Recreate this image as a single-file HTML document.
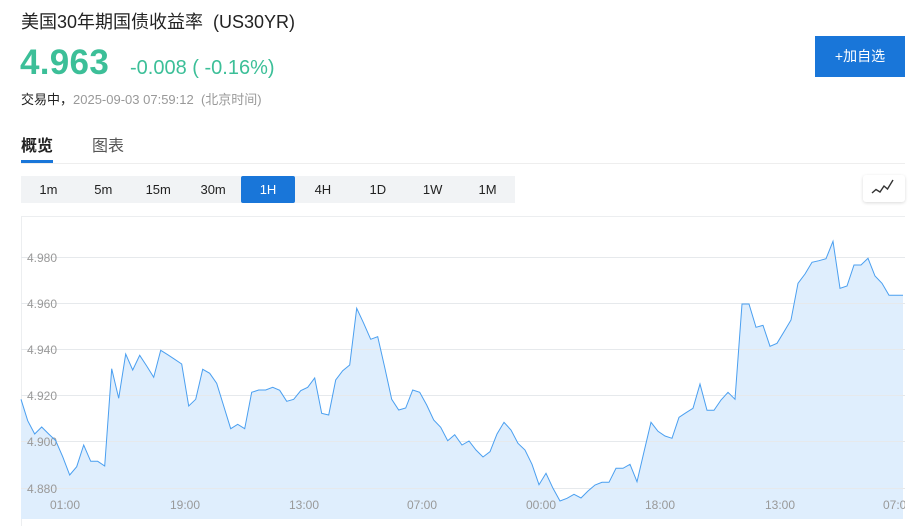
<!DOCTYPE html>
<html><head><meta charset="utf-8"><style>
*{margin:0;padding:0;box-sizing:border-box}
body{width:915px;height:526px;overflow:hidden;background:#fff;font-family:"Liberation Sans","Noto Sans CJK SC",sans-serif;position:relative;color:#222}
.a{position:absolute;white-space:nowrap}
</style></head><body>
<div class="a" style="left:21px;top:8px;font-size:18px;color:#222">美国30年期国债收益率 &nbsp;(US30YR)</div>
<div class="a" style="left:20px;top:43px;font-size:35px;font-weight:bold;color:#3cbf98;letter-spacing:0.3px">4.963</div>
<div class="a" style="left:130px;top:57px;font-size:20px;color:#3cbf98">-0.008 ( -0.16%)</div>
<div class="a" style="left:21px;top:89px;font-size:13px;color:#222">交易中，<span style="color:#999">2025-09-03 07:59:12 &nbsp;(北京时间)</span></div>
<div class="a" style="left:815px;top:36px;width:90px;height:41px;background:#1976d9;color:#fff;font-size:14px;line-height:41px;text-align:center">+加自选</div>
<div class="a" style="left:21px;top:132px;font-size:16px;font-weight:bold;color:#222">概览</div>
<div class="a" style="left:92px;top:132px;font-size:16px;color:#555">图表</div>
<div class="a" style="left:21px;top:160px;width:32px;height:3px;background:#1976d9"></div>
<div class="a" style="left:21px;top:163px;width:884px;height:1px;background:#eee"></div>
<div class="a" style="left:21px;top:176px;width:494px;height:27px;background:#f1f3f5;font-size:13px;display:flex">
<div style="width:54.9px;text-align:center;line-height:27px">1m</div>
<div style="width:54.9px;text-align:center;line-height:27px">5m</div>
<div style="width:54.9px;text-align:center;line-height:27px">15m</div>
<div style="width:54.9px;text-align:center;line-height:27px">30m</div>
<div style="width:54.9px;text-align:center;line-height:27px;background:#1976d9;color:#fff;border-radius:2px">1H</div>
<div style="width:54.9px;text-align:center;line-height:27px">4H</div>
<div style="width:54.9px;text-align:center;line-height:27px">1D</div>
<div style="width:54.9px;text-align:center;line-height:27px">1W</div>
<div style="width:54.9px;text-align:center;line-height:27px">1M</div>
</div>
<div class="a" style="left:863px;top:175px;width:42px;height:27px;background:#fff;border-radius:3px;box-shadow:0 1px 3px rgba(0,0,0,0.15)"></div>
<svg class="a" style="left:0;top:0" width="915" height="526">
<polyline points="872,193 876,189.5 880,192 884,186 887.5,189 893,180" fill="none" stroke="#333" stroke-width="1.4"/>
<rect x="21.5" y="216.5" width="884" height="310" fill="none" stroke="#eceef0"/>
<polygon fill="#dfeefd" points="21,519 21,399.3 27.7,420.7 34.7,434 41.7,427 48.7,434 55.7,440.7 62.7,456.7 69.7,475 76.7,466.7 83.7,445 90.7,461.3 97.7,461.3 104.7,466 111.7,368.7 118.7,398.3 125.7,354 132.7,370 139.7,355.3 146.7,366 153.7,377.3 160.7,350.3 167.7,354.7 174.7,359.3 181.7,364 188.7,406 195.7,399.3 202.7,369.3 209.7,373.3 216.7,383.3 223.7,406 230.7,428.7 237.7,424.3 244.7,428.7 251.7,392.3 258.7,390 265.7,390 272.7,387.3 279.7,390.3 286.7,401.3 293.7,399.3 300.7,390.7 307.7,387.3 314.7,378 321.7,413.3 328.7,415 335.7,380 342.7,370.7 349.7,365 356.7,308.3 363.7,323.3 370.7,339.3 377.7,336.7 384.7,367.3 391.7,399.3 398.7,410 405.7,408 412.7,390 419.7,392.3 426.7,405 433.7,420 440.7,427.3 447.7,440.7 454.7,434.7 462,445 469,441 476,450 483,457 490,451.7 497,434 504,422.3 511,430 518,443.3 525,450 532,464.3 539,484.7 546,473.3 553,488.3 560,501 567,498.3 574,494.3 581,498 588,491 595,485 602,482.3 609,482.3 616,468.3 623,468.3 630,464.3 637,481.7 644,451.7 651,422.3 658,431.3 665,436 672,438.3 679,417.3 686,412.7 693,408.3 700,384 707,410.3 714,410.3 721,400 728,392.3 735,399.3 742,304 749,304 756,327.3 763,325.3 770,346.3 777,343.3 784,331.7 791,320 798,283.3 805,274 812,262.3 819,260.7 826,258.7 833,241.3 840,288.3 847,286 854,265 861,265 868,258.3 875,276 882,283.3 889,295.3 903,295.3 903,519"/>
<g stroke="#e6e9ec" stroke-width="1">
<line x1="21" y1="257.5" x2="905" y2="257.5"/><line x1="21" y1="303.5" x2="905" y2="303.5"/><line x1="21" y1="349.5" x2="905" y2="349.5"/><line x1="21" y1="395.5" x2="905" y2="395.5"/><line x1="21" y1="441.5" x2="905" y2="441.5"/><line x1="21" y1="488.5" x2="905" y2="488.5"/>
</g>
<g font-size="12" fill="#999" font-family="Liberation Sans,sans-serif">
<text x="27" y="262">4.980</text><text x="27" y="308">4.960</text><text x="27" y="354">4.940</text><text x="27" y="400">4.920</text><text x="27" y="446">4.900</text><text x="27" y="493">4.880</text>
</g>
<polyline fill="none" stroke="#4a9ff0" stroke-width="1" points="21,399.3 27.7,420.7 34.7,434 41.7,427 48.7,434 55.7,440.7 62.7,456.7 69.7,475 76.7,466.7 83.7,445 90.7,461.3 97.7,461.3 104.7,466 111.7,368.7 118.7,398.3 125.7,354 132.7,370 139.7,355.3 146.7,366 153.7,377.3 160.7,350.3 167.7,354.7 174.7,359.3 181.7,364 188.7,406 195.7,399.3 202.7,369.3 209.7,373.3 216.7,383.3 223.7,406 230.7,428.7 237.7,424.3 244.7,428.7 251.7,392.3 258.7,390 265.7,390 272.7,387.3 279.7,390.3 286.7,401.3 293.7,399.3 300.7,390.7 307.7,387.3 314.7,378 321.7,413.3 328.7,415 335.7,380 342.7,370.7 349.7,365 356.7,308.3 363.7,323.3 370.7,339.3 377.7,336.7 384.7,367.3 391.7,399.3 398.7,410 405.7,408 412.7,390 419.7,392.3 426.7,405 433.7,420 440.7,427.3 447.7,440.7 454.7,434.7 462,445 469,441 476,450 483,457 490,451.7 497,434 504,422.3 511,430 518,443.3 525,450 532,464.3 539,484.7 546,473.3 553,488.3 560,501 567,498.3 574,494.3 581,498 588,491 595,485 602,482.3 609,482.3 616,468.3 623,468.3 630,464.3 637,481.7 644,451.7 651,422.3 658,431.3 665,436 672,438.3 679,417.3 686,412.7 693,408.3 700,384 707,410.3 714,410.3 721,400 728,392.3 735,399.3 742,304 749,304 756,327.3 763,325.3 770,346.3 777,343.3 784,331.7 791,320 798,283.3 805,274 812,262.3 819,260.7 826,258.7 833,241.3 840,288.3 847,286 854,265 861,265 868,258.3 875,276 882,283.3 889,295.3 903,295.3"/>
<g font-size="12" fill="#999" font-family="Liberation Sans,sans-serif" text-anchor="middle">
<text x="65" y="509">01:00</text><text x="185" y="509">19:00</text><text x="304" y="509">13:00</text><text x="422" y="509">07:00</text><text x="541" y="509">00:00</text><text x="660" y="509">18:00</text><text x="780" y="509">13:00</text><text x="898" y="509">07:00</text>
</g>
<rect x="905" y="215" width="10" height="311" fill="#fff"/>
</svg>
</body></html>
